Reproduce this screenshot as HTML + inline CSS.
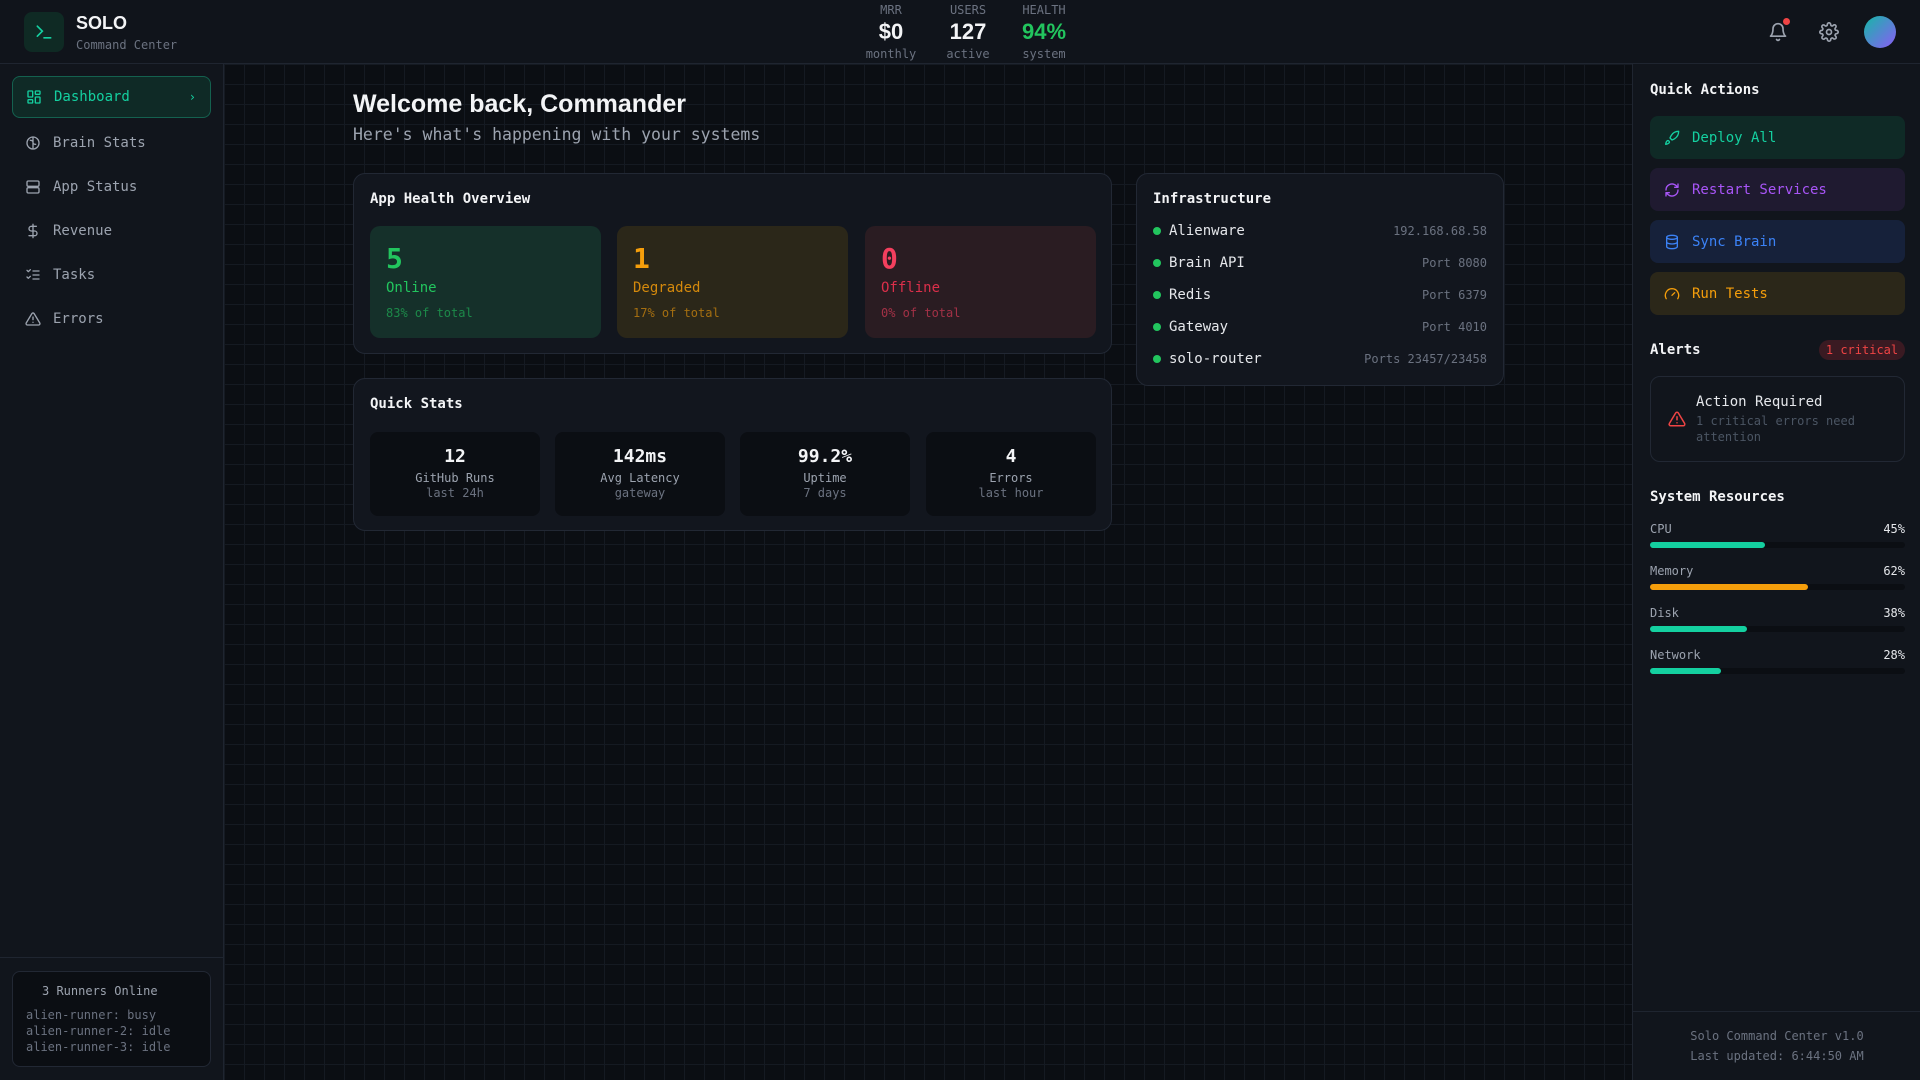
<!DOCTYPE html>
<html><head><meta charset="utf-8"><style>
*{box-sizing:border-box;margin:0;padding:0}
body{width:1920px;height:1080px;overflow:hidden;background:#0b0e13;font-family:"DejaVu Sans Mono","Liberation Mono",monospace;color:#e5e7eb;position:relative}
.a{position:absolute}
.grid{left:224px;top:64px;width:1408px;height:1016px;background-color:#0b0e13;background-image:linear-gradient(#151a22 1px,transparent 1px),linear-gradient(90deg,#151a22 1px,transparent 1px);background-size:20px 20px}
.hdr{left:0;top:0;width:1920px;height:64px;background:#10141b;border-bottom:1px solid #1f2530}
.side{left:0;top:64px;width:224px;height:1016px;background:#11151c;border-right:1px solid #1f2530}
.right{left:1632px;top:64px;width:288px;height:1016px;background:#11151c;border-left:1px solid #1f2530}
.lab{font-size:12px;color:#6b7280;text-align:center}
.nav{left:12px;width:199px;height:42px;display:flex;align-items:center;padding-left:13px;font-size:14px;color:#9ca3af;gap:12px}
.nav svg{width:16px;height:16px;stroke:currentColor;fill:none;stroke-width:2;stroke-linecap:round;stroke-linejoin:round}
.card{background:#12161e;border:1px solid #222834;border-radius:12px}
.ct{font-size:14px;font-weight:bold;color:#f3f4f6}
.hb{top:52px;width:231px;height:112px;border-radius:10px;padding:16px}
.hb .n{font-size:28px;font-weight:bold;line-height:34px}
.hb .l{font-size:14px;margin-top:4px}
.hb .s{font-size:12px;margin-top:10px;opacity:.6}
.qs{top:53px;width:170px;height:84px;background:#0b0e13;border-radius:8px;text-align:center;padding-top:14px}
.qs .n{font-size:18px;font-weight:bold;color:#f3f4f6}
.qs .l{font-size:12px;color:#9ca3af;margin-top:4px}
.qs .s{font-size:12px;color:#6b7280;margin-top:1px}
.row{left:16px;right:16px;height:20px;display:flex;align-items:center;font-size:14px;color:#e5e7eb}
.row i{width:8px;height:8px;border-radius:50%;background:#22c55e;margin-right:8px}
.row span{margin-left:auto;font-size:12px;color:#6b7280}
.qa{left:17px;width:255px;height:43px;border-radius:8px;display:flex;align-items:center;padding-left:14px;gap:12px;font-size:14px}
.qa svg{width:16px;height:16px;stroke:currentColor;fill:none;stroke-width:2;stroke-linecap:round;stroke-linejoin:round}
.res{left:17px;width:255px;font-size:12px}
.res .t{display:flex;justify-content:space-between;color:#9ca3af}
.res .t b{font-weight:normal;color:#e5e7eb}
.bar{height:6px;background:#0b0e13;border-radius:3px;margin-top:6px}
.bar div{height:6px;border-radius:3px}
</style></head><body>
<div class="a grid"></div>
<div class="a hdr">
 <div class="a" style="left:24px;top:12px;width:40px;height:40px;border-radius:8px;background:#0f2a24;display:flex;align-items:center;justify-content:center">
  <svg width="20" height="20" viewBox="0 0 24 24" fill="none" stroke="#14d0a0" stroke-width="2" stroke-linecap="round"><path d="M4 17l6-6-6-6M12 19h8"/></svg></div>
 <div class="a" style="left:76px;top:13px;font-family:'Liberation Sans',sans-serif;font-weight:bold;font-size:18px;color:#f3f4f6">SOLO</div>
 <div class="a" style="left:76px;top:38px;font-size:12px;color:#6b7280">Command Center</div>
 <div class="a" style="left:851px;top:3px;width:80px"><div class="lab">MRR</div><div style="font-family:'Liberation Sans',sans-serif;font-weight:bold;font-size:22px;text-align:center;color:#f3f4f6;line-height:30px">$0</div><div class="lab">monthly</div></div>
 <div class="a" style="left:928px;top:3px;width:80px"><div class="lab">USERS</div><div style="font-family:'Liberation Sans',sans-serif;font-weight:bold;font-size:22px;text-align:center;color:#f3f4f6;line-height:30px">127</div><div class="lab">active</div></div>
 <div class="a" style="left:1004px;top:3px;width:80px"><div class="lab">HEALTH</div><div style="font-family:'Liberation Sans',sans-serif;font-weight:bold;font-size:22px;text-align:center;color:#22c55e;line-height:30px">94%</div><div class="lab">system</div></div>
 <svg class="a" style="left:1768px;top:22px" width="20" height="20" viewBox="0 0 24 24" fill="none" stroke="#9ca3af" stroke-width="2" stroke-linecap="round" stroke-linejoin="round"><path d="M6 8a6 6 0 0112 0c0 7 3 9 3 9H3s3-2 3-9M10.3 21a1.9 1.9 0 003.4 0"/></svg>
 <div class="a" style="left:1783px;top:18px;width:7px;height:7px;border-radius:50%;background:#ef4444"></div>
 <svg class="a" style="left:1819px;top:22px" width="20" height="20" viewBox="0 0 24 24" fill="none" stroke="#9ca3af" stroke-width="2" stroke-linecap="round" stroke-linejoin="round"><circle cx="12" cy="12" r="3"/><path d="M19.4 15a1.7 1.7 0 00.3 1.8l.1.1a2 2 0 11-2.8 2.8l-.1-.1a1.7 1.7 0 00-1.8-.3 1.7 1.7 0 00-1 1.5V21a2 2 0 01-4 0v-.1a1.7 1.7 0 00-1.1-1.5 1.7 1.7 0 00-1.8.3l-.1.1a2 2 0 11-2.8-2.8l.1-.1a1.7 1.7 0 00.3-1.8 1.7 1.7 0 00-1.5-1H3a2 2 0 010-4h.1a1.7 1.7 0 001.5-1.100 1.7 1.7 0 00-.3-1.8l-.1-.1a2 2 0 112.8-2.8l.1.1a1.7 1.7 0 001.8.3H9a1.7 1.7 0 001-1.5V3a2 2 0 014 0v.1a1.7 1.7 0 001 1.5 1.7 1.7 0 001.8-.3l.1-.1a2 2 0 112.8 2.8l-.1.1a1.7 1.7 0 00-.3 1.8V9a1.7 1.7 0 001.5 1H21a2 2 0 010 4h-.1a1.7 1.7 0 00-1.5 1z"/></svg>
 <div class="a" style="left:1864px;top:16px;width:32px;height:32px;border-radius:50%;background:linear-gradient(135deg,#14b8a6,#8b5cf6)"></div>
</div>
<div class="a side">
 <div class="a nav" style="top:12px;background:#0f2a26;border:1px solid #14614f;border-radius:8px;color:#14d0a0"><svg viewBox="0 0 24 24"><rect x="3" y="3" width="7" height="9" rx="1"/><rect x="14" y="3" width="7" height="5" rx="1"/><rect x="14" y="12" width="7" height="9" rx="1"/><rect x="3" y="16" width="7" height="5" rx="1"/></svg>Dashboard<span style="margin-left:auto;margin-right:14px;font-size:12px">›</span></div>
 <div class="a nav" style="top:58px"><svg viewBox="0 0 24 24"><circle cx="12" cy="12" r="9"/><path d="M12 3v18M8 8c2 0 4 1 4 3M16 14c-2 0-4-1-4-3"/></svg>Brain Stats</div>
 <div class="a nav" style="top:102px"><svg viewBox="0 0 24 24"><rect x="3" y="3" width="18" height="8" rx="2"/><rect x="3" y="13" width="18" height="8" rx="2"/></svg>App Status</div>
 <div class="a nav" style="top:146px"><svg viewBox="0 0 24 24"><path d="M12 2v20M17 5H9.5a3.5 3.5 0 000 7h5a3.5 3.5 0 010 7H6"/></svg>Revenue</div>
 <div class="a nav" style="top:190px"><svg viewBox="0 0 24 24"><path d="M3 5l2 2 3-3M3 15l2 2 3-3M12 6h9M12 12h9M12 18h9"/></svg>Tasks</div>
 <div class="a nav" style="top:234px"><svg viewBox="0 0 24 24"><path d="M10.3 3.9L1.8 18a2 2 0 001.7 3h17a2 2 0 001.7-3L13.7 3.9a2 2 0 00-3.4 0zM12 9v4M12 17h.01"/></svg>Errors</div>
 <div class="a" style="left:0;top:893px;width:223px;border-top:1px solid #1f2530"></div>
 <div class="a" style="left:12px;top:907px;width:199px;height:96px;background:#0b0e13;border:1px solid #222834;border-radius:8px;padding:11px 13px;font-size:12px;color:#6b7280;line-height:16px">
  <div style="color:#9ca3af;padding-left:16px;margin-bottom:8px">3 Runners Online</div>
  <div>alien-runner: busy</div><div>alien-runner-2: idle</div><div>alien-runner-3: idle</div></div>
</div>
<div class="a" style="left:353px;top:90px;font-family:'Liberation Sans',sans-serif;font-weight:bold;font-size:25px;color:#f3f4f6">Welcome back, Commander</div>
<div class="a" style="left:353px;top:125px;font-size:16.5px;color:#9ca3af">Here's what's happening with your systems</div>
<div class="a card" style="left:353px;top:173px;width:759px;height:181px">
 <div class="a ct" style="left:16px;top:17px">App Health Overview</div>
 <div class="a hb" style="left:16px;background:#15302a;color:#22c55e"><div class="n">5</div><div class="l">Online</div><div class="s">83% of total</div></div>
 <div class="a hb" style="left:263px;background:#2b2719;color:#f59e0b"><div class="n">1</div><div class="l" style="color:#d4890c">Degraded</div><div class="s">17% of total</div></div>
 <div class="a hb" style="left:511px;background:#2a1c22;color:#f43f5e"><div class="n">0</div><div class="l" style="color:#dc2f4a">Offline</div><div class="s">0% of total</div></div>
</div>
<div class="a card" style="left:353px;top:378px;width:759px;height:153px">
 <div class="a ct" style="left:16px;top:17px">Quick Stats</div>
 <div class="a qs" style="left:16px"><div class="n">12</div><div class="l">GitHub Runs</div><div class="s">last 24h</div></div>
 <div class="a qs" style="left:201px"><div class="n">142ms</div><div class="l">Avg Latency</div><div class="s">gateway</div></div>
 <div class="a qs" style="left:386px"><div class="n">99.2%</div><div class="l">Uptime</div><div class="s">7 days</div></div>
 <div class="a qs" style="left:572px"><div class="n">4</div><div class="l">Errors</div><div class="s">last hour</div></div>
</div>
<div class="a card" style="left:1136px;top:173px;width:368px;height:213px">
 <div class="a ct" style="left:16px;top:17px">Infrastructure</div>
 <div class="a row" style="top:47px"><i></i>Alienware<span>192.168.68.58</span></div>
 <div class="a row" style="top:79px"><i></i>Brain API<span>Port 8080</span></div>
 <div class="a row" style="top:111px"><i></i>Redis<span>Port 6379</span></div>
 <div class="a row" style="top:143px"><i></i>Gateway<span>Port 4010</span></div>
 <div class="a row" style="top:175px"><i></i>solo-router<span>Ports 23457/23458</span></div>
</div>
<div class="a right">
 <div class="a ct" style="left:17px;top:18px">Quick Actions</div>
 <div class="a qa" style="top:52px;background:#0f2a26;color:#14d0a0"><svg viewBox="0 0 24 24"><path d="M4.5 16.5c-1.5 1.3-2 5-2 5s3.7-.5 5-2c.7-.8.7-2.1-.1-2.9a2.2 2.2 0 00-2.9-.1zM12 15l-3-3a22 22 0 012-4A12.9 12.9 0 0122 2c0 2.7-.8 7.5-6 11a22 22 0 01-4 2z"/></svg>Deploy All</div>
 <div class="a qa" style="top:104px;background:#1f1a30;color:#a855f7"><svg viewBox="0 0 24 24"><path d="M21 12a9 9 0 01-15 6.7L3 16M3 12a9 9 0 0115-6.7L21 8M21 3v5h-5M3 21v-5h5"/></svg>Restart Services</div>
 <div class="a qa" style="top:156px;background:#16213a;color:#3b82f6"><svg viewBox="0 0 24 24"><ellipse cx="12" cy="5" rx="8" ry="3"/><path d="M4 5v14c0 1.7 3.6 3 8 3s8-1.3 8-3V5M4 12c0 1.7 3.6 3 8 3s8-1.3 8-3"/></svg>Sync Brain</div>
 <div class="a qa" style="top:208px;background:#2b2719;color:#f59e0b"><svg viewBox="0 0 24 24"><path d="M12 14l4-4M3.3 19a10 10 0 1117.4 0"/></svg>Run Tests</div>
 <div class="a ct" style="left:17px;top:278px">Alerts</div>
 <div class="a" style="left:186px;top:276px;width:86px;height:20px;border-radius:10px;background:#3a1a22;color:#ef4444;font-size:12px;text-align:center;line-height:20px">1 critical</div>
 <div class="a" style="left:17px;top:312px;width:255px;height:86px;border:1px solid #222834;border-radius:10px">
  <svg class="a" style="left:17px;top:33px" width="18" height="18" viewBox="0 0 24 24" fill="none" stroke="#ef4444" stroke-width="2" stroke-linecap="round" stroke-linejoin="round"><path d="M10.3 3.9L1.8 18a2 2 0 001.7 3h17a2 2 0 001.7-3L13.7 3.9a2 2 0 00-3.4 0zM12 9v4M12 17h.01"/></svg>
  <div class="a" style="left:45px;top:17px;font-size:14px;color:#e5e7eb">Action Required</div>
  <div class="a" style="left:45px;top:36px;width:200px;font-size:12px;color:#4b5563;line-height:16px">1 critical errors need attention</div>
 </div>
 <div class="a ct" style="left:17px;top:425px">System Resources</div>
 <div class="a res" style="top:458px"><div class="t">CPU<b>45%</b></div><div class="bar"><div style="width:45%;background:#14d0a0"></div></div></div>
 <div class="a res" style="top:500px"><div class="t">Memory<b>62%</b></div><div class="bar"><div style="width:62%;background:#f59e0b"></div></div></div>
 <div class="a res" style="top:542px"><div class="t">Disk<b>38%</b></div><div class="bar"><div style="width:38%;background:#14d0a0"></div></div></div>
 <div class="a res" style="top:584px"><div class="t">Network<b>28%</b></div><div class="bar"><div style="width:28%;background:#14d0a0"></div></div></div>
 <div class="a" style="left:0;top:947px;width:288px;border-top:1px solid #1f2530"></div>
 <div class="a" style="left:0;top:962px;width:288px;text-align:center;font-size:12px;color:#6b7280;line-height:20px">Solo Command Center v1.0<br>Last updated: 6:44:50 AM</div>
</div>
</body></html>
